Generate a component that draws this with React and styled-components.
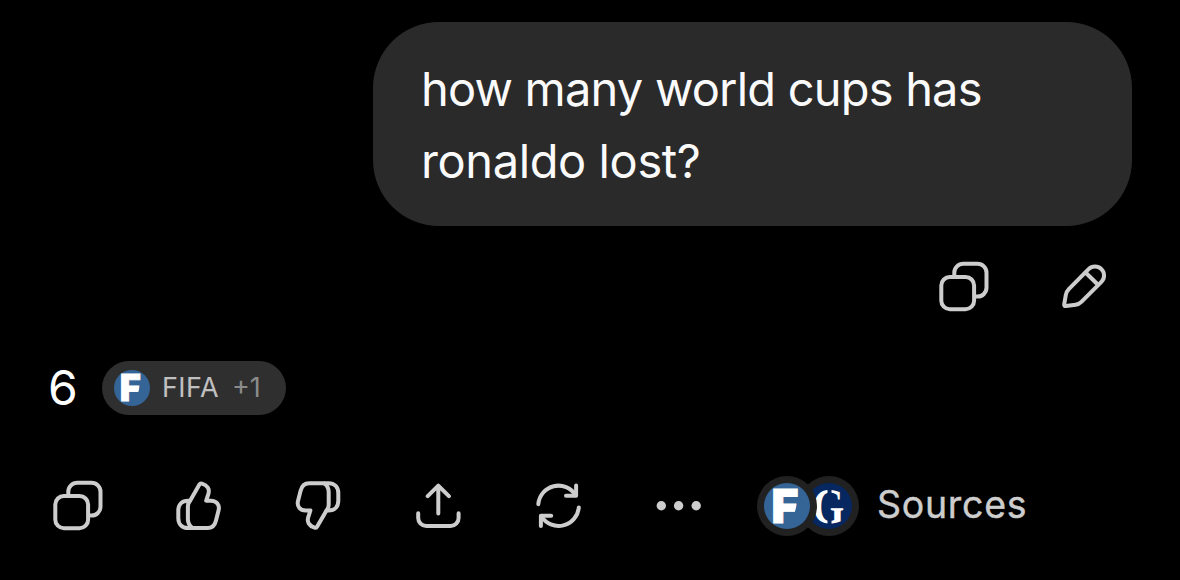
import React from "react";
import styled, { createGlobalStyle } from "styled-components";

const GlobalStyle = createGlobalStyle`
    body {
        margin: 0;
        background-color: #000;
        font-family: "Inter", "Liberation Sans", sans-serif;
    }
`;

const Layout = styled.main`
    box-sizing: border-box;
    width: 1180px;
    height: 580px;
    padding: 22px 48px 0;
    display: flex;
    flex-direction: column;
    background-color: #000;
    color: #fff;
    overflow: hidden;
`;

const Question = styled.div`
    align-self: flex-end;
    box-sizing: border-box;
    width: 759px;
    height: 204px;
    padding: 31px 100px 0 48px;
    border-radius: 66px;
    background-color: #2a2a2a;
    color: #fafafa;
    font-size: 47px;
    line-height: 72px;
    letter-spacing: -0.4px;

    &::first-line {
        letter-spacing: -0.8px;
    }
`;

const QuestionActions = styled.div`
    align-self: flex-end;
    display: flex;
    gap: 60px;
    margin: 31px 18px 0 0;
`;

const IconButton = styled.button`
    width: 60px;
    height: 60px;
    padding: 0;
    border: none;
    background: none;
    color: #cdcdcd;

    svg {
        display: block;
        fill: none;
        stroke: currentColor;
        stroke-width: 4;
        stroke-linecap: round;
        stroke-linejoin: round;
    }
`;

const Answer = styled.div`
    display: flex;
    align-items: center;
    gap: 24px;
    height: 54px;
    margin-top: 43.5px;
`;

const AnswerText = styled.span`
    width: 30px;
    font-size: 48px;
    line-height: 54px;
`;

const SourcePill = styled.span`
    box-sizing: border-box;
    width: 184px;
    height: 54px;
    padding-left: 12px;
    display: flex;
    align-items: center;
    border-radius: 27px;
    background-color: #2f2f2f;
    color: #c0c0c0;
    font-size: 27px;
`;

const PillName = styled.span`
    margin-left: 12px;
    letter-spacing: 0.4px;
`;

const PillCount = styled.span`
    margin-left: 13px;
    color: #8b8b8b;
`;

const Toolbar = styled.div`
    display: flex;
    align-items: center;
    gap: 60px;
    height: 60px;
    margin-top: 61.5px;
`;

const Sources = styled.div`
    display: flex;
    align-items: center;
    margin-left: -11px;
    color: #cdcdcd;
    font-size: 37.5px;
    letter-spacing: 0.7px;
`;

const SourcesLabel = styled.span`
    line-height: 56px;
    padding-bottom: 3px;
    -webkit-text-stroke: 0.4px currentColor;
`;

const Badges = styled.div`
    display: flex;
    margin-right: 18px;
`;

const Badge = styled.span`
    position: relative;
    z-index: ${({ $front }) => ($front ? 1 : 0)};
    box-sizing: border-box;
    width: 60px;
    height: 60px;
    padding: 7px;
    border-radius: 50%;
    background-color: #212121;

    & + & {
        margin-left: -18px;
    }
`;

const Favicon = styled.svg`
    display: block;
    width: ${({ $size }) => $size}px;
    height: ${({ $size }) => $size}px;
    overflow: visible;
`;

function FifaIcon({ size }) {
    return (
        <Favicon $size={size} viewBox="0 0 46 46">
            <circle cx="23" cy="23" r="23" fill="#356497" />
            <text
                transform="translate(7.5 40) scale(0.98 1)"
                fill="#fff"
                stroke="#fff"
                strokeWidth="1"
                fontFamily="Inter"
                fontWeight="900"
                fontSize="47"
            >
                F
            </text>
            <path d="M37 4.5V14H34.2ZM34 18V29H30.8Z" fill="#356497" />
        </Favicon>
    );
}

function GuardianIcon({ size }) {
    return (
        <Favicon $size={size} viewBox="0 0 46 46">
            <circle cx="23" cy="23" r="23" fill="#06275f" />
            <text
                transform="translate(6.5 40) scale(0.8 1)"
                fill="#fff"
                fontFamily="Liberation Serif"
                fontWeight="700"
                fontSize="51"
            >
                G
            </text>
            <path d="M23.5 3v8M23.5 35v8" stroke="#06275f" strokeWidth="4" />
        </Favicon>
    );
}

function Icon({ children }) {
    return (
        <svg width="60" height="60" viewBox="0 0 60 60">
            {children}
        </svg>
    );
}

const CopyIcon = () => (
    <Icon>
        <rect x="7.3" y="20" width="32.8" height="32.2" rx="8.5" />
        <path d="M20.3 19v-3.2a9 9 0 0 1 9-9h14.2a9 9 0 0 1 9 9v14.8a9 9 0 0 1-9 9h-2.5" />
    </Icon>
);

const EditIcon = () => (
    <Icon>
        <path d="M10.2 47.3 11.8 38Q12.4 34.6 14.8 32.2L34.6 12.1A9 9 0 0 1 47.4 24.9L27.4 44.9Q25 47.3 21.6 47.8L12 49.1Q9.9 49.3 10.2 47.3Z" />
        <path d="M31.5 15.5 44 27.8" />
    </Icon>
);

const thumb = (
    <>
        <path d="M22.4 24.2 31.4 8.6Q32.3 7 34 7.6C39.5 9.2 41.8 13.2 40.4 17.8L38.2 24.7H43C48.6 24.7 51.9 29 50.6 34.2L48 44.4C46.8 49.5 44 52 39.5 52H20C14 52 10.3 48 10.3 42V34.5C10.3 28.5 14 24.7 20 24.7H21.5Q22.1 24.7 22.4 24.2Z" />
        <path d="M22 24.9Q19.9 27.2 19.9 30.4V43Q19.9 48.5 24 51.5" />
    </>
);

const LikeIcon = () => <Icon>{thumb}</Icon>;

const DislikeIcon = () => (
    <Icon>
        <g transform="rotate(180 30.3 29.6)">{thumb}</g>
    </Icon>
);

const ShareIcon = () => (
    <Icon>
        <path d="M30.3 37.5V10M19.7 20.2 30.3 9.6 40.9 20.2" />
        <path d="M10.2 37.3V42a8 8 0 0 0 8 8h24.4a8 8 0 0 0 8-8v-4.7" />
    </Icon>
);

const RetryIcon = () => (
    <Icon>
        <path d="M10.3 28.2A20.2 20.2 0 0 1 47.6 19.2" />
        <path d="M48.1 9.5V19.7H38" />
        <path d="M50.8 31.4A20.2 20.2 0 0 1 13.4 40.2" />
        <path d="M12.9 50V39.7H23.2" />
    </Icon>
);

const MoreIcon = () => (
    <Icon>
        <g fill="currentColor" stroke="none">
            <circle cx="13.3" cy="29.8" r="4.7" />
            <circle cx="30.6" cy="29.8" r="4.7" />
            <circle cx="48.2" cy="29.8" r="4.7" />
        </g>
    </Icon>
);

const answerActions = [
    { label: "Copy", icon: CopyIcon },
    { label: "Like", icon: LikeIcon },
    { label: "Dislike", icon: DislikeIcon },
    { label: "Share", icon: ShareIcon },
    { label: "Retry", icon: RetryIcon },
    { label: "More", icon: MoreIcon },
];

function App() {
    return (
        <Layout>
            <GlobalStyle />
            <Question>how many world cups has ronaldo lost?</Question>
            <QuestionActions>
                <IconButton aria-label="Copy">
                    <CopyIcon />
                </IconButton>
                <IconButton aria-label="Edit">
                    <EditIcon />
                </IconButton>
            </QuestionActions>
            <Answer>
                <AnswerText>6</AnswerText>
                <SourcePill>
                    <FifaIcon size={36} />
                    <PillName>FIFA</PillName>
                    <PillCount>+1</PillCount>
                </SourcePill>
            </Answer>
            <Toolbar>
                {answerActions.map(({ label, icon: ActionIcon }) => (
                    <IconButton key={label} aria-label={label}>
                        <ActionIcon />
                    </IconButton>
                ))}
                <Sources>
                    <Badges>
                        <Badge $front>
                            <FifaIcon size={46} />
                        </Badge>
                        <Badge>
                            <GuardianIcon size={46} />
                        </Badge>
                    </Badges>
                    <SourcesLabel>Sources</SourcesLabel>
                </Sources>
            </Toolbar>
        </Layout>
    );
}

export default App;
